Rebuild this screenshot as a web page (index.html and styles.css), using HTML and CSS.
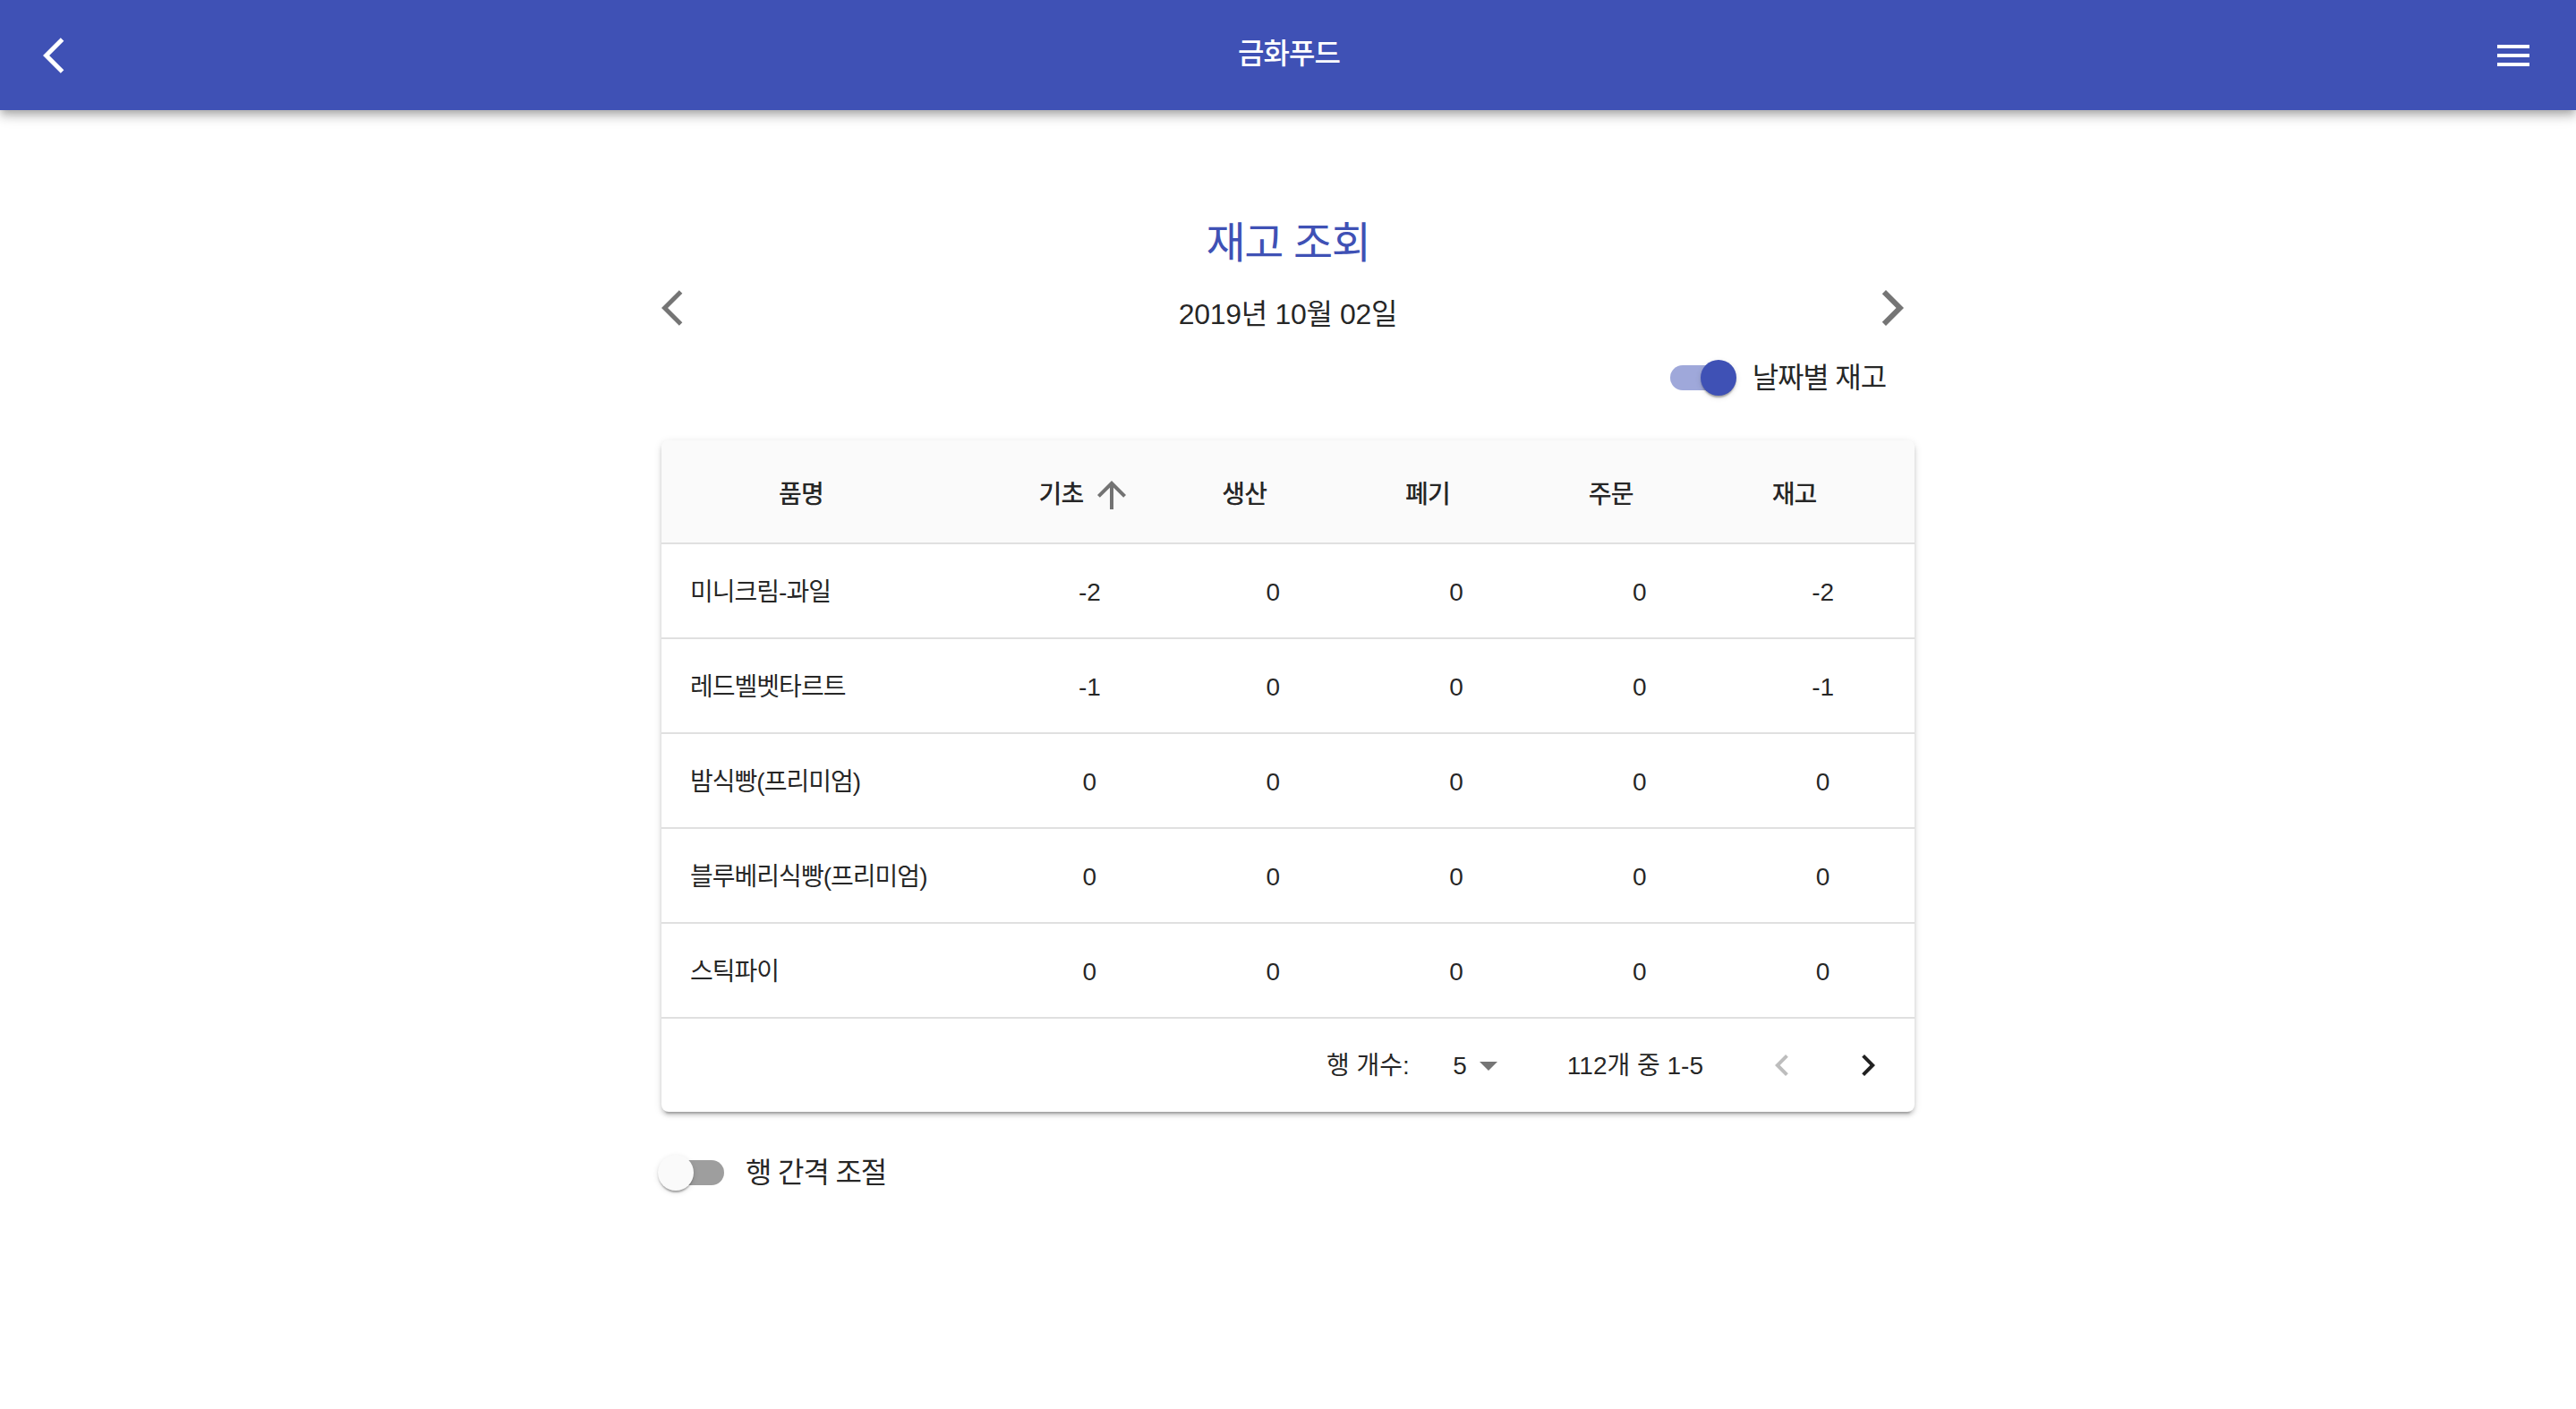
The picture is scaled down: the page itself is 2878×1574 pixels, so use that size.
FILE: index.html
```html
<!DOCTYPE html>
<html lang="ko">
<head>
<meta charset="utf-8">
<title>금화푸드 - 재고 조회</title>
<link rel="stylesheet" href="styles.css">
</head>
<body>
<header class="appbar">
  <button class="icon-btn" aria-label="뒤로">
    <svg class="icon" viewBox="0 0 24 24"><path d="M11.67 3.87L9.9 2.1 0 12l9.9 9.9 1.77-1.77L3.54 12z"/></svg>
  </button>
  <h1 class="app-title">금화푸드</h1>
  <button class="icon-btn menu-btn" aria-label="메뉴">
    <svg class="icon" viewBox="0 0 24 24"><path d="M3 18h18v-2H3v2zm0-5h18v-2H3v2zm0-7v2h18V6H3z"/></svg>
  </button>
</header>

<main class="content">
  <h2 class="page-title">재고 조회</h2>

  <div class="date-row">
    <svg class="icon nav-arrow" viewBox="0 0 24 24"><path d="M11.67 3.87L9.9 2.1 0 12l9.9 9.9 1.77-1.77L3.54 12z"/></svg>
    <span class="date-text">2019년 10월 02일</span>
    <svg class="icon nav-arrow" viewBox="0 0 24 24"><path d="M5.88 4.12L13.76 12l-7.88 7.88L8 22l10-10L8 2z"/></svg>
  </div>

  <div class="toggle-row">
    <label class="switch-label">
      <span class="switch checked"><span class="track"></span><span class="thumb"></span></span>
      <span class="switch-text">날짜별 재고</span>
    </label>
  </div>

  <section class="card">
    <div class="table">
      <div class="row head">
        <div class="cell"><span class="sort"><span>품명</span><svg class="sort-icon" viewBox="0 0 24 24"><path d="M4 12l1.41 1.41L11 7.83V20h2V7.83l5.58 5.59L20 12l-8-8-8 8z"/></svg></span></div>
        <div class="cell"><span class="sort active"><span>기초</span><svg class="sort-icon" viewBox="0 0 24 24"><path d="M4 12l1.41 1.41L11 7.83V20h2V7.83l5.58 5.59L20 12l-8-8-8 8z"/></svg></span></div>
        <div class="cell"><span class="sort"><span>생산</span><svg class="sort-icon" viewBox="0 0 24 24"><path d="M4 12l1.41 1.41L11 7.83V20h2V7.83l5.58 5.59L20 12l-8-8-8 8z"/></svg></span></div>
        <div class="cell"><span class="sort"><span>폐기</span><svg class="sort-icon" viewBox="0 0 24 24"><path d="M4 12l1.41 1.41L11 7.83V20h2V7.83l5.58 5.59L20 12l-8-8-8 8z"/></svg></span></div>
        <div class="cell"><span class="sort"><span>주문</span><svg class="sort-icon" viewBox="0 0 24 24"><path d="M4 12l1.41 1.41L11 7.83V20h2V7.83l5.58 5.59L20 12l-8-8-8 8z"/></svg></span></div>
        <div class="cell"><span class="sort"><span>재고</span><svg class="sort-icon" viewBox="0 0 24 24"><path d="M4 12l1.41 1.41L11 7.83V20h2V7.83l5.58 5.59L20 12l-8-8-8 8z"/></svg></span></div>
      </div>
      <div class="row">
        <div class="cell name">미니크림-과일</div><div class="cell">-2</div><div class="cell">0</div><div class="cell">0</div><div class="cell">0</div><div class="cell">-2</div>
      </div>
      <div class="row">
        <div class="cell name">레드벨벳타르트</div><div class="cell">-1</div><div class="cell">0</div><div class="cell">0</div><div class="cell">0</div><div class="cell">-1</div>
      </div>
      <div class="row">
        <div class="cell name">밤식빵(프리미엄)</div><div class="cell">0</div><div class="cell">0</div><div class="cell">0</div><div class="cell">0</div><div class="cell">0</div>
      </div>
      <div class="row">
        <div class="cell name">블루베리식빵(프리미엄)</div><div class="cell">0</div><div class="cell">0</div><div class="cell">0</div><div class="cell">0</div><div class="cell">0</div>
      </div>
      <div class="row">
        <div class="cell name">스틱파이</div><div class="cell">0</div><div class="cell">0</div><div class="cell">0</div><div class="cell">0</div><div class="cell">0</div>
      </div>
    </div>
    <div class="pagination">
      <span class="caption">행 개수:</span>
      <span class="select">
        <span class="select-value">5</span>
        <svg class="select-icon" viewBox="0 0 24 24"><path d="M7 10l5 5 5-5z"/></svg>
      </span>
      <span class="caption">112개 중 1-5</span>
      <span class="actions">
        <button class="icon-btn page-btn disabled" aria-label="이전 페이지"><svg class="icon" viewBox="0 0 24 24"><path d="M15.41 16.59L10.83 12l4.58-4.59L14 6l-6 6 6 6 1.41-1.41z"/></svg></button>
        <button class="icon-btn page-btn" aria-label="다음 페이지"><svg class="icon" viewBox="0 0 24 24"><path d="M8.59 16.59L13.17 12 8.59 7.41 10 6l6 6-6 6-1.41-1.41z"/></svg></button>
      </span>
    </div>
  </section>

  <label class="switch-label dense-toggle">
    <span class="switch"><span class="track"></span><span class="thumb"></span></span>
    <span class="switch-text">행 간격 조절</span>
  </label>
</main>
</body>
</html>
```

FILE: styles.css
```css
html {
  zoom: 2;
}

body {
  margin: 0;
  background: #ffffff;
  font-family: "Liberation Sans", "Noto Sans CJK KR", sans-serif;
  color: rgba(0, 0, 0, 0.87);
}

button {
  font: inherit;
}

.icon {
  width: 24px;
  height: 24px;
  fill: currentColor;
  display: block;
  flex-shrink: 0;
}

.icon-btn {
  border: 0;
  background: transparent;
  padding: 12px;
  margin: 0;
  color: inherit;
  cursor: pointer;
  display: flex;
  border-radius: 50%;
}

/* App bar */
.appbar {
  height: 61.5px;
  background: #3f51b5;
  color: #ffffff;
  display: grid;
  grid-template-columns: 1fr auto 1fr;
  align-items: center;
  padding: 0 11px 0 12px;
  box-shadow: 0 2px 4px -1px rgba(0, 0, 0, 0.2), 0 4px 5px 0 rgba(0, 0, 0, 0.14), 0 1px 10px 0 rgba(0, 0, 0, 0.12);
  position: relative;
}

.app-title {
  margin: 0 0 2px;
  font-size: 16px;
  font-weight: 500;
  line-height: 1.5;
  letter-spacing: -0.03em;
}

.menu-btn {
  justify-self: end;
}

/* Content */
.content {
  width: 700px;
  margin: 0 auto;
  padding-top: 58.5px;
  display: flex;
  flex-direction: column;
}

.page-title {
  margin: 0;
  font-size: 24px;
  font-weight: 400;
  line-height: 32px;
  color: #3f51b5;
  text-align: center;
  letter-spacing: -0.03em;
}

.date-row {
  height: 40px;
  margin-top: 2px;
  display: flex;
  align-items: center;
  justify-content: space-between;
}

.nav-arrow {
  color: rgba(0, 0, 0, 0.54);
  margin-bottom: 4px;
}

.date-text {
  font-size: 16px;
  line-height: 24px;
  padding-top: 3px;
  letter-spacing: -0.01em;
}

.toggle-row {
  height: 32px;
  display: flex;
  justify-content: flex-end;
  align-items: center;
  padding-top: 1px;
}

.switch-label {
  display: inline-flex;
  align-items: center;
  margin-right: 16px;
  margin-left: -11px;
  cursor: pointer;
}

.switch {
  width: 58px;
  height: 38px;
  padding: 12px;
  box-sizing: border-box;
  position: relative;
  flex-shrink: 0;
}

.track {
  display: block;
  width: 34px;
  height: 14px;
  border-radius: 7px;
  background: #000000;
  opacity: 0.38;
}

.thumb {
  position: absolute;
  top: 9px;
  left: 9px;
  width: 20px;
  height: 20px;
  border-radius: 50%;
  background: #fafafa;
  box-shadow: 0 2px 1px -1px rgba(0, 0, 0, 0.2), 0 1px 1px 0 rgba(0, 0, 0, 0.14), 0 1px 3px 0 rgba(0, 0, 0, 0.12);
}

.switch.checked .track {
  background: #3f51b5;
  opacity: 0.5;
}

.switch.checked .thumb {
  left: 29px;
  background: #3f51b5;
}

.switch-text {
  font-size: 16px;
  line-height: 1.5;
  letter-spacing: -0.035em;
}

/* Card / table */
.card {
  margin-top: 19px;
  background: #ffffff;
  border-radius: 4px;
  box-shadow: 0 3px 1px -2px rgba(0, 0, 0, 0.2), 0 2px 2px 0 rgba(0, 0, 0, 0.14), 0 1px 5px 0 rgba(0, 0, 0, 0.12);
  overflow: hidden;
}

.row {
  display: grid;
  grid-template-columns: 188px repeat(5, 1fr);
  height: 53px;
  box-sizing: border-box;
  border-bottom: 1px solid #e0e0e0;
  font-size: 14px;
  line-height: 20px;
}

.row.head {
  height: 58px;
  background: #fafafa;
  font-weight: 500;
}

.cell {
  display: flex;
  align-items: center;
  justify-content: center;
  padding-top: 2px;
}

.row.head .cell {
  padding-top: 4px;
  letter-spacing: -0.03em;
}

.cell.name {
  justify-content: flex-start;
  padding-left: 16px;
  letter-spacing: -0.035em;
}

.sort {
  display: inline-flex;
  align-items: center;
}

.sort-icon {
  width: 24px;
  height: 24px;
  margin: 0 4px;
  fill: rgba(0, 0, 0, 0.54);
  opacity: 0;
}

.sort.active .sort-icon {
  opacity: 1;
}

.pagination {
  height: 52px;
  display: flex;
  align-items: center;
  justify-content: flex-end;
  padding-right: 2px;
  font-size: 14px;
  line-height: 20px;
}

.caption {
  padding-top: 1px;
}

.select {
  display: flex;
  align-items: center;
  margin-left: 8px;
  margin-right: 32px;
  padding-left: 8px;
}

.select-value {
  min-width: 16px;
  text-align: right;
  padding-top: 1px;
}

.select-icon {
  width: 24px;
  height: 24px;
  fill: rgba(0, 0, 0, 0.54);
}

.actions {
  display: flex;
  margin-left: 20px;
}

.page-btn {
  color: rgba(0, 0, 0, 0.87);
}

.page-btn.disabled {
  color: rgba(0, 0, 0, 0.26);
}

.dense-toggle {
  align-self: flex-start;
  margin-top: 15px;
}
```
